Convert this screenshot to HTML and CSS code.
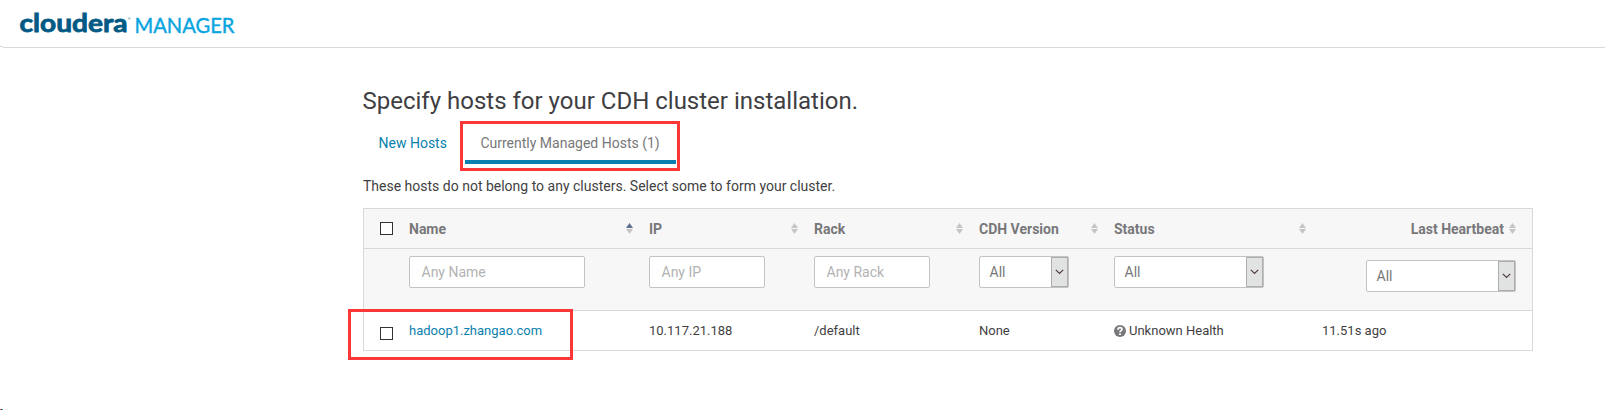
FILE: index.html
```html
<!DOCTYPE html>
<html lang="en">
<head>
<meta charset="utf-8">
<title>Cloudera Manager</title>
<link rel="stylesheet" href="styles.css">
</head>
<body>
<svg class="defs" width="0" height="0">
  <symbol id="sort" viewBox="0 0 7 11"><path class="up" d="M3.5 0 7 5H0z"/><path class="down" d="M0 6h7L3.5 11z"/></symbol>
  <symbol id="chev" viewBox="0 0 9 6"><path d="M.8.8 4.5 4.5 8.2.8" fill="none" stroke="#503c48" stroke-width="1.2"/></symbol>
</svg>
<header class="topbar">
  <svg class="logo" width="240" height="48" viewBox="0 0 240 48" role="img">
    <text class="logo-name" x="19.5" y="32" textLength="108" lengthAdjust="spacingAndGlyphs">cloudera</text>
    <circle cx="129.3" cy="18.5" r="1.100" fill="#8db4cc"/>
    <text class="logo-product" x="134.500" y="32.500" textLength="100" lengthAdjust="spacingAndGlyphs">MANAGER</text>
    <path d="M0 46.500h3" stroke="#d9d9d9"/>
  </svg>
</header>
<main class="content">
  <h1 class="title">Specify hosts for your CDH cluster installation.</h1>
  <nav class="tabs">
    <a class="tab">New Hosts</a>
    <a class="tab active">Currently Managed Hosts (1)<span class="mark mark-tab"></span></a>
  </nav>
  <p class="hint">These hosts do not belong to any clusters. Select some to form your cluster.</p>
  <section class="hosts">
    <div class="row head">
      <div class="cell"><span class="check"></span></div>
      <div class="cell"><span>Name</span><svg class="sort asc"><use href="#sort"/></svg></div>
      <div class="cell"><span>IP</span><svg class="sort"><use href="#sort"/></svg></div>
      <div class="cell"><span>Rack</span><svg class="sort"><use href="#sort"/></svg></div>
      <div class="cell"><span>CDH Version</span><svg class="sort"><use href="#sort"/></svg></div>
      <div class="cell"><span>Status</span><svg class="sort"><use href="#sort"/></svg></div>
      <div class="cell last"><span>Last Heartbeat</span><svg class="sort"><use href="#sort"/></svg></div>
    </div>
    <div class="row filters">
      <div class="cell"></div>
      <div class="cell"><div class="field wide">Any Name</div></div>
      <div class="cell"><div class="field">Any IP</div></div>
      <div class="cell"><div class="field">Any Rack</div></div>
      <div class="cell"><div class="select small"><span>All</span><i class="arrow"><svg><use href="#chev"/></svg></i></div></div>
      <div class="cell"><div class="select"><span>All</span><i class="arrow"><svg><use href="#chev"/></svg></i></div></div>
      <div class="cell last lower"><div class="select"><span>All</span><i class="arrow"><svg><use href="#chev"/></svg></i></div></div>
    </div>
    <div class="row host">
      <div class="cell"><span class="check"></span></div>
      <div class="cell"><a class="link">hadoop1.zhangao.com</a></div>
      <div class="cell">10.117.21.188</div>
      <div class="cell">/default</div>
      <div class="cell">None</div>
      <div class="cell status"><svg class="unknown" viewBox="0 0 12 12"><circle cx="6" cy="6" r="6" fill="#77777c"/><path d="M4 4.7C4 2 8 2.100 8 4.300 8 5.700 6 5.600 6 7.300" fill="none" stroke="#fff" stroke-width="1.700"/><rect x="5.100" y="8.300" width="1.800" height="1.600" fill="#fff"/></svg><span>Unknown Health</span></div>
      <div class="cell">11.51s ago</div>
    </div>
    <span class="mark mark-host"></span>
  </section>
</main>
<span class="speck"></span>
</body>
</html>
```
FILE: styles.css
```css
* { box-sizing: border-box; }
body { margin: 0; height: 410px; overflow: hidden; background: #fff; color: #3f3f43; font: 13px/20px Roboto, sans-serif; }
.defs { position: absolute; }
.topbar { height: 48px; background: linear-gradient(#d9d9d9, #d9d9d9) 3px 47px / 100% 1px no-repeat; }
.logo { display: block; }
.logo-name { font: 700 25px Lato, sans-serif; fill: #015a84; stroke: #015a84; stroke-width: .8px; }
.logo-product { font: 400 21px Lato, sans-serif; fill: #0aa5df; stroke: #0aa5df; stroke-width: .4px; }
.content { width: 1170px; margin-left: 363px; padding-top: 38px; }
.title { margin: 0 0 0 -.5px; font-size: 24px; line-height: 30px; font-weight: 400; height: 34px; }
.tabs { display: flex; height: 44px; }
.tab { position: relative; padding: 13px 16px 0 15.5px; font-size: 14px; line-height: 20px; color: #0b7fad; white-space: nowrap; }
.tab + .tab { margin-left: 2px; }
.active { width: 211px; color: #77777a; border-bottom: 4px solid #0b7fad; }
.mark { position: absolute; border: 3px solid #fb3737; }
.mark-tab { left: -5px; top: 1px; width: 220px; height: 50px; }
.hint { margin: 0; padding-top: 12px; height: 44px; font-size: 14px; }
.hosts { position: relative; border: 1px solid #d9d9d9; height: 143px; }
.row { display: grid; grid-template-columns: 37px 240px 165px 165px 135px 208px 218px; }
.cell { display: flex; align-items: center; padding: 0 8px; }
.cell:first-child { padding-left: 16px; }
.head { height: 40px; background: #f7f7f7; border-bottom: 1px solid #d9d9d9; color: #77777a; font-size: 14px; font-weight: 700; }
.head .cell { justify-content: space-between; }
.head .last { justify-content: flex-end; gap: 5px; padding-right: 16px; }
.check { width: 13px; height: 13px; border: 1px solid #333; background: #fff; }
.sort { width: 7px; height: 11px; fill: #c5c5c5; }
.up { fill: var(--up, #c5c5c5); }
.asc { --up: #5f7190; }
.filters { height: 62px; background: #f7f7f7; border-bottom: 1px solid #d9d9d9; font-size: 14px; color: #77777a; }
.filters .cell { align-items: flex-start; padding-top: 7px; }
.filters .lower { padding: 11px 16px 0 0; justify-content: flex-end; }
.field { width: 116px; height: 32px; border: 1px solid #c3c3c3; border-radius: 2px; background: #fff; padding: 5px 11.5px; color: #b2b2b2; line-height: 20px; }
.wide { width: 176px; }
.select { display: flex; width: 150px; height: 32px; justify-content: space-between; border: 1px solid #c3c3c3; border-radius: 2px; background: #fff; padding-left: 9.5px; line-height: 30px; }
.small { width: 90px; }
.arrow { display: flex; align-items: center; justify-content: center; width: 17px; height: 30px; border: 1px solid #adadad; background: #e1e2e2; }
.arrow svg { width: 9px; height: 6px; }
.host { height: 39px; }
.host .check { margin-top: 6px; }
.link { color: #0b7fad; }
.status { gap: 3px; }
.unknown { width: 12px; height: 12px; }
.mark-host { left: -16px; top: 100px; width: 225px; height: 51px; }
.speck { position: absolute; left: 0; top: 409px; width: 3px; height: 1px; background: linear-gradient(90deg, #e34b4b 33%, #345 33% 66%, #39c 66%); }
```
